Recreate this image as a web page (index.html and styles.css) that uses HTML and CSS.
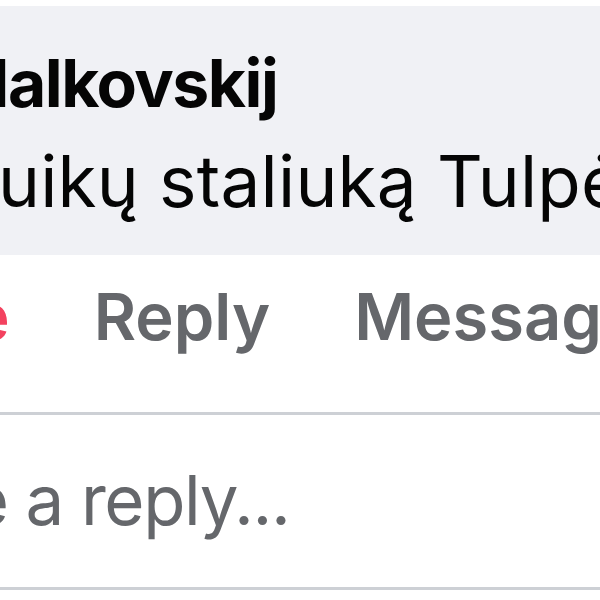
FILE: index.html
```html
<!DOCTYPE html>
<html lang="lt">
<head>
  <meta charset="UTF-8">
  <meta name="viewport" content="width=device-width, initial-scale=1.0">
  <title>Comment</title>
  <link rel="stylesheet" href="styles.css">
</head>
<body>
  <div class="comment">
    <div class="bubble">
      <div class="author">Malkovskij</div>
      <div class="text">uikų staliuką Tulpė</div>
    </div>

    <div class="actions">
      <span class="action liked">Like</span>
      <span class="action">Reply</span>
      <span class="action">Message</span>
    </div>

    <div class="reply-box">
      <span class="placeholder">Write a reply...</span>
    </div>
  </div>
</body>
</html>
```

FILE: styles.css
```css
body {
  margin: 0;
  font-family: Inter, 'Noto Sans', sans-serif;
  background-color: #fff;
  color: #050505;
  overflow: hidden;
}

.comment {
  width: 600px;
  overflow: hidden;
}

.bubble {
  margin-top: 6px;
  height: 249px;
  box-sizing: border-box;
  padding-top: 37px;
  background-color: #f0f1f5;
  white-space: nowrap;
}

.author {
  font-size: 66px;
  font-weight: 700;
  line-height: 80px;
  letter-spacing: -1.5px;
  margin-left: -52px;
}

.text {
  font-size: 71px;
  line-height: 100px;
  margin-top: 8px;
  margin-left: -2px;
  letter-spacing: 0.2px;
}

.actions {
  display: flex;
  gap: 84px;
  height: 160px;
  box-sizing: border-box;
  padding-top: 22px;
  margin-left: -118px;
  border-bottom: 3px solid #cdd0d5;
  white-space: nowrap;
}

.action {
  font-size: 65px;
  font-weight: 600;
  line-height: 80px;
  color: #65676b;
}

.action.liked {
  color: #f3425f;
}

.reply-box {
  height: 175px;
  box-sizing: border-box;
  padding-top: 35px;
  margin-left: -157px;
  border-bottom: 3px solid #cdd0d5;
  white-space: nowrap;
}

.placeholder {
  font-size: 69px;
  line-height: 100px;
  letter-spacing: -1.4px;
  color: #65676b;
}
```
